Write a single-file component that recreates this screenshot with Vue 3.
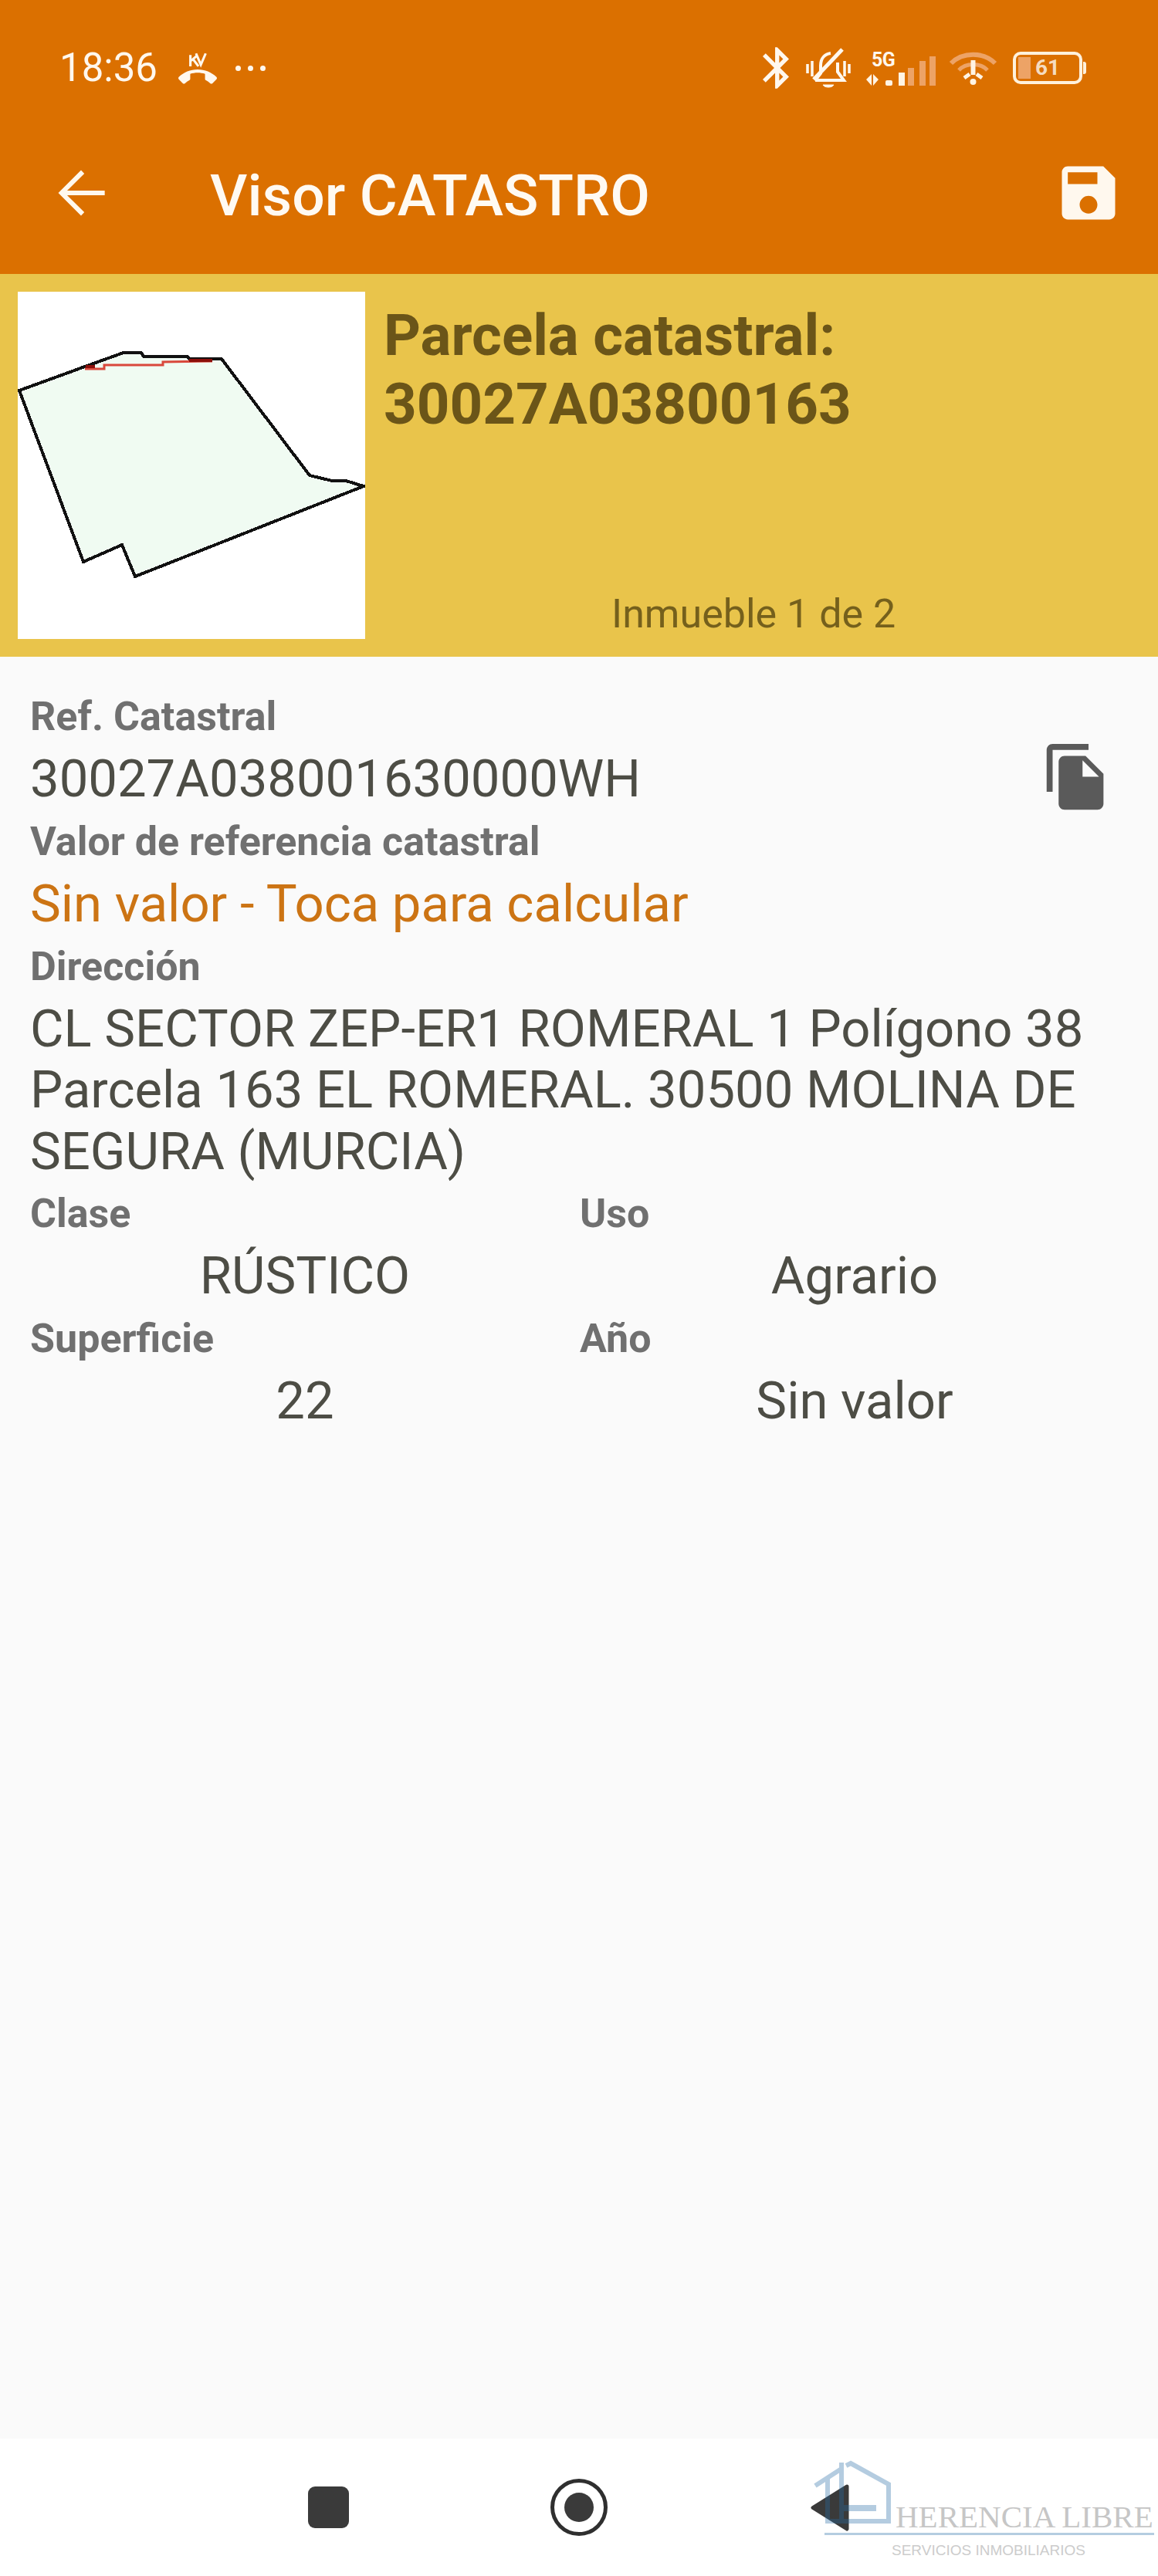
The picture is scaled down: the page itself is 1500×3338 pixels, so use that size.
<template>
  <div class="screen">
    <header class="top">
      <div class="status-bar">
        <div class="status-left">
          <span class="time">18:36</span>
          <svg class="ic-call" viewBox="0 0 24 20" fill="currentColor">
            <path d="M12 13c-1.600 0-3.150.25-4.600.72v3.100c0 .39-.23.74-.56.9-.98.49-1.870 1.120-2.660 1.850-.18.18-.43.28-.7.28-.28 0-.53-.11-.71-.29L.29 17.080c-.18-.17-.29-.42-.29-.7 0-.28.11-.53.29-.71C3.340 12.780 7.460 11 12 11s8.660 1.780 11.710 4.670c.18.18.29.43.29.71 0 .28-.11.53-.29.71l-2.480 2.480c-.18.18-.43.29-.71.29-.27 0-.52-.11-.7-.28-.79-.74-1.690-1.360-2.670-1.850-.33-.16-.56-.5-.56-.9v-3.100C15.150 13.250 13.600 13 12 13z"/>
            <path d="M7.500 2v7M8 5.500L12 2M9.500 5l3 4M11 1l3 7 3-7" fill="none" stroke="currentColor" stroke-width="1.500"/>
          </svg>
          <span class="dots"><i></i><i></i><i></i></span>
        </div>
        <div class="status-right">
          <svg class="ic-bt" viewBox="5 2 12.710 20" fill="currentColor">
            <path d="M17.710 7.710L12 2h-1v7.590L6.410 5 5 6.410 10.590 12 5 17.590 6.410 19 11 14.410V22h1l5.710-5.710-4.300-4.290 4.300-4.290zM13 5.830l1.880 1.880L13 9.590V5.830zm1.880 10.460L13 18.170v-3.760l1.880 1.880z"/>
          </svg>
          <svg class="ic-bell" viewBox="0 0 60 54" fill="none" stroke="currentColor" stroke-width="4">
            <path d="M13 43L20 34V24C20 14 26 9 33 8"/>
            <path d="M42 20V32L50 43H13"/>
            <path d="M23 49h14c-2 4-12 4-14 0z" fill="currentColor" stroke-width="1"/>
            <path d="M11 42L48 3" stroke-width="5"/>
            <path d="M3 22v12M9 18v20M51 18v20M57 22v12" stroke-width="3.500"/>
          </svg>
          <div class="signal">
            <span class="net">5G</span>
            <svg class="ic-signal" viewBox="0 0 91 42">
              <path d="M7 26l-7 7 7 8zM9 26l7 7-7 8z" fill="#fff4e4"/>
              <rect x="25" y="34" width="9" height="7" rx="2" fill="#fff4e4"/>
              <rect x="42" y="24" width="8" height="17" fill="#fff4e4"/>
              <rect x="54" y="18" width="8" height="23" fill="#eda366"/>
              <rect x="69" y="9" width="8" height="32" fill="#eda366"/>
              <rect x="82" y="3" width="8" height="38" fill="#eda366"/>
            </svg>
          </div>
          <svg class="ic-wifi" viewBox="0 0 63 46" fill="none">
            <path d="M3 17C18 2 45 2 60 17" stroke="#eda366" stroke-width="6"/>
            <path d="M13 26C22 16 41 16 50 26" stroke="#eda366" stroke-width="5"/>
            <path d="M31.500 13v19" stroke="#fff4e4" stroke-width="6"/>
            <path d="M20 36l7-5M43 36l-7-5" stroke="#fff4e4" stroke-width="5"/>
            <circle cx="31.500" cy="41" r="4" fill="#fff4e4"/>
          </svg>
          <div class="battery">
            <div class="batt-body">
              <span class="batt-fill"></span>
              <span class="batt-num">61</span>
            </div>
            <span class="batt-nub"></span>
          </div>
        </div>
      </div>
      <div class="toolbar">
        <svg class="ic-tool" viewBox="0 0 24 24" fill="currentColor">
          <path d="M20 11.200H7.300l5.800-5.700L12 4.300 4.300 12l7.700 7.700 1.100-1.200-5.800-5.700H20z"/>
        </svg>
        <h1 class="title">Visor CATASTRO</h1>
        <svg class="ic-tool ic-save" viewBox="0 0 24 24" fill="currentColor">
          <path d="M17 3H5c-1.100 0-2 .9-2 2v14c0 1.100.9 2 2 2h14c1.100 0 2-.9 2-2V7l-4-4zm-5 16c-1.660 0-3-1.340-3-3s1.340-3 3-3 3 1.340 3 3-1.340 3-3 3zm3-10H5V5h10v4z"/>
        </svg>
      </div>
    </header>

    <section class="summary">
      <svg class="thumb" viewBox="0 0 450 450">
        <polygon
          points="2,128 87,97 137,79 160,79 163,84 220,84 222,87 264,87 378,238 407,245 425,245 448,252 152,369 135,328 85,350"
          fill="#f0fbf2" stroke="#111" stroke-width="4" shape-rendering="crispEdges"
        />
        <polyline points="87,100 112,100 112,95 188,95 188,91 252,90" fill="none" stroke="#d9483c" stroke-width="3"/>
        <path d="M222 89h30M88 97h12" stroke="#8c0f0a" stroke-width="4"/>
      </svg>
      <div class="summary-text">
        <h2 class="parcel">Parcela catastral:<br>30027A03800163</h2>
        <p class="counter">Inmueble 1 de 2</p>
      </div>
    </section>

    <main class="detail">
      <div class="label">Ref. Catastral</div>
      <div class="value-row">
        <div class="value">30027A038001630000WH</div>
        <svg class="ic-copy" viewBox="0 0 24 24" fill="currentColor">
          <path d="M16 1H4c-1.100 0-2 .9-2 2v14h2V3h12V1zm-1 4l6 6v10c0 1.100-.9 2-2 2H7.990C6.890 23 6 22.100 6 21l.01-14c0-1.100.89-2 1.990-2h7zm-1 7h5.500L14 6.500V12z"/>
        </svg>
      </div>
      <div class="label">Valor de referencia catastral</div>
      <div class="value link">Sin valor - Toca para calcular</div>
      <div class="label">Dirección</div>
      <div class="value">CL SECTOR ZEP-ER1 ROMERAL 1 Polígono 38 Parcela 163 EL ROMERAL. 30500 MOLINA DE SEGURA (MURCIA)</div>
      <div class="pairs">
        <div v-for="item in pairs" :key="item.label">
          <div class="label">{{ item.label }}</div>
          <div class="value center">{{ item.value }}</div>
        </div>
      </div>
    </main>

    <nav class="nav">
      <div class="nav-cell"><span class="nav-square"></span></div>
      <div class="nav-cell"><span class="nav-home"><i></i></span></div>
      <div class="nav-cell">
        <svg class="nav-back" viewBox="0 0 50 61"><path d="M47 3L3 30.500 47 58z" fill="#3a3a3a" stroke="#3a3a3a" stroke-width="5" stroke-linejoin="round"/></svg>
      </div>
      <div class="watermark">
        <svg class="wm-house" viewBox="0 0 110 95" fill="none" stroke="#266ca5">
          <path d="M6 36L40 14M46 10L52 7 101 34V82H20" stroke-width="6"/>
          <path d="M22 27V85M40 6V85" stroke-width="6"/>
          <path d="M40 65H85" stroke-width="8"/>
        </svg>
        <div class="wm-name">HERENCIA LIBRE</div>
        <div class="wm-line"></div>
        <div class="wm-sub">SERVICIOS INMOBILIARIOS</div>
      </div>
    </nav>
  </div>
</template>

<script setup>
const pairs = [
  { label: 'Clase', value: 'RÚSTICO' },
  { label: 'Uso', value: 'Agrario' },
  { label: 'Superficie', value: '22' },
  { label: 'Año', value: 'Sin valor' }
]
</script>

<style>
html, body { margin: 0; padding: 0; }
</style>

<style scoped>
.screen {
  width: 1500px;
  height: 3338px;
  display: flex;
  flex-direction: column;
  background: #fafafa;
  font-family: Roboto, "Liberation Sans", sans-serif;
  overflow: hidden;
}

.top {
  height: 355px;
  background: #db7000;
  color: #fff8ee;
  display: flex;
  flex-direction: column;
  flex-shrink: 0;
}

.status-bar {
  height: 145px;
  padding: 60px 93px 0 77px;
  box-sizing: border-box;
  display: flex;
  justify-content: space-between;
}
.status-left, .status-right {
  height: 56px;
  display: flex;
  align-items: center;
}
.time { font-size: 51px; line-height: 56px; }
.ic-call { width: 50px; height: 42px; margin-left: 27px; }
.dots { display: flex; gap: 9px; margin-left: 24px; }
.dots i { width: 7px; height: 7px; border-radius: 50%; background: currentColor; }

.ic-bt { width: 34px; height: 54px; }
.ic-bell { width: 60px; height: 54px; margin-left: 21px; }
.signal { position: relative; width: 91px; height: 44px; margin-left: 19px; margin-top: 4px; }
.net {
  position: absolute;
  left: 7px;
  top: -2px;
  font-size: 25px;
  line-height: 24px;
  font-weight: 700;
  letter-spacing: -0.500px;
}
.ic-signal { position: absolute; left: 0; bottom: 0; width: 91px; height: 42px; }
.ic-wifi { width: 63px; height: 46px; margin-left: 16px; }
.battery { display: flex; align-items: center; margin-left: 20px; }
.batt-body {
  width: 90px;
  height: 42px;
  box-sizing: border-box;
  border: 4px solid #fff1dc;
  border-radius: 10px;
  position: relative;
  display: flex;
  align-items: center;
  justify-content: center;
}
.batt-fill {
  position: absolute;
  left: 3px;
  top: 3px;
  bottom: 3px;
  width: 16px;
  background: #eda366;
}
.batt-num {
  position: relative;
  font-size: 28px;
  font-weight: 700;
  line-height: 1;
  color: #f5dcc0;
}
.batt-nub { width: 4px; height: 16px; background: #fff1dc; margin-left: 1px; border-radius: 0 3px 3px 0; }

.toolbar {
  flex: 1;
  display: flex;
  align-items: flex-start;
  padding: 59px 44px 0 59px;
  position: relative;
}
.ic-tool { width: 92px; height: 92px; flex-shrink: 0; }
.ic-save { margin-left: auto; }
.title {
  margin: 3px 0 0 121px;
  font-size: 75px;
  line-height: 92px;
  font-weight: 500;
  color: #fffaf2;
}

.summary {
  height: 496px;
  flex-shrink: 0;
  background: #e9c44b;
  box-sizing: border-box;
  padding: 23px 0 23px 23px;
  display: flex;
}
.thumb { width: 450px; height: 450px; background: #fff; flex-shrink: 0; }
.summary-text {
  flex: 1;
  padding-left: 24px;
  display: flex;
  flex-direction: column;
  justify-content: space-between;
}
.parcel {
  margin: 0;
  padding-top: 12px;
  font-size: 74.500px;
  line-height: 89px;
  font-weight: 700;
  color: #6b5518;
}
.counter {
  margin: 0 0 0 295px;
  font-size: 52px;
  line-height: 60px;
  color: #75601c;
  padding-bottom: 2px;
}

.detail {
  flex: 1;
  padding: 37px 37px 0 39px;
}
.label {
  font-size: 52px;
  line-height: 82px;
  font-weight: 700;
  color: #707070;
}
.value {
  font-size: 67px;
  line-height: 79.500px;
  color: #4d4d45;
}
.value.link { color: #cc7414; }
.value.center { text-align: center; }
.value-row { display: flex; align-items: center; justify-content: space-between; padding-right: 22px; }
.ic-copy { width: 93px; height: 93px; margin: -10px 0 -3px; color: #5a5a5a; flex-shrink: 0; }
.pairs { display: grid; grid-template-columns: 712px 712px; }

.nav {
  height: 178px;
  flex-shrink: 0;
  background: #fff;
  display: flex;
  justify-content: center;
  align-items: center;
  position: relative;
}
.nav-cell { width: 325px; display: flex; justify-content: center; }
.nav-square { width: 53px; height: 54px; border-radius: 9px; background: #3a3a3a; }
.nav-home {
  width: 74px;
  height: 74px;
  box-sizing: border-box;
  border: 5px solid #2f2f2f;
  border-radius: 50%;
  display: flex;
  align-items: center;
  justify-content: center;
}
.nav-home i { width: 38px; height: 38px; border-radius: 50%; background: #3a3a3a; }
.nav-back { width: 50px; height: 61px; }

.watermark {
  position: absolute;
  left: 1050px;
  top: 25px;
  width: 450px;
  height: 153px;
}
.wm-house { position: absolute; left: 0; top: 0; width: 110px; height: 95px; opacity: 0.34; }
.wm-name {
  position: absolute;
  left: 110px;
  top: 50px;
  font-family: "Liberation Serif", serif;
  font-size: 41px;
  line-height: 52px;
  color: #c6c6c6;
  white-space: nowrap;
}
.wm-line { position: absolute; left: 18px; top: 97px; width: 427px; height: 3px; background: #b5cde0; }
.wm-sub {
  position: absolute;
  left: 105px;
  top: 108px;
  font-family: "Liberation Sans", sans-serif;
  font-size: 19px;
  line-height: 24px;
  color: #cccccc;
  white-space: nowrap;
}
</style>
